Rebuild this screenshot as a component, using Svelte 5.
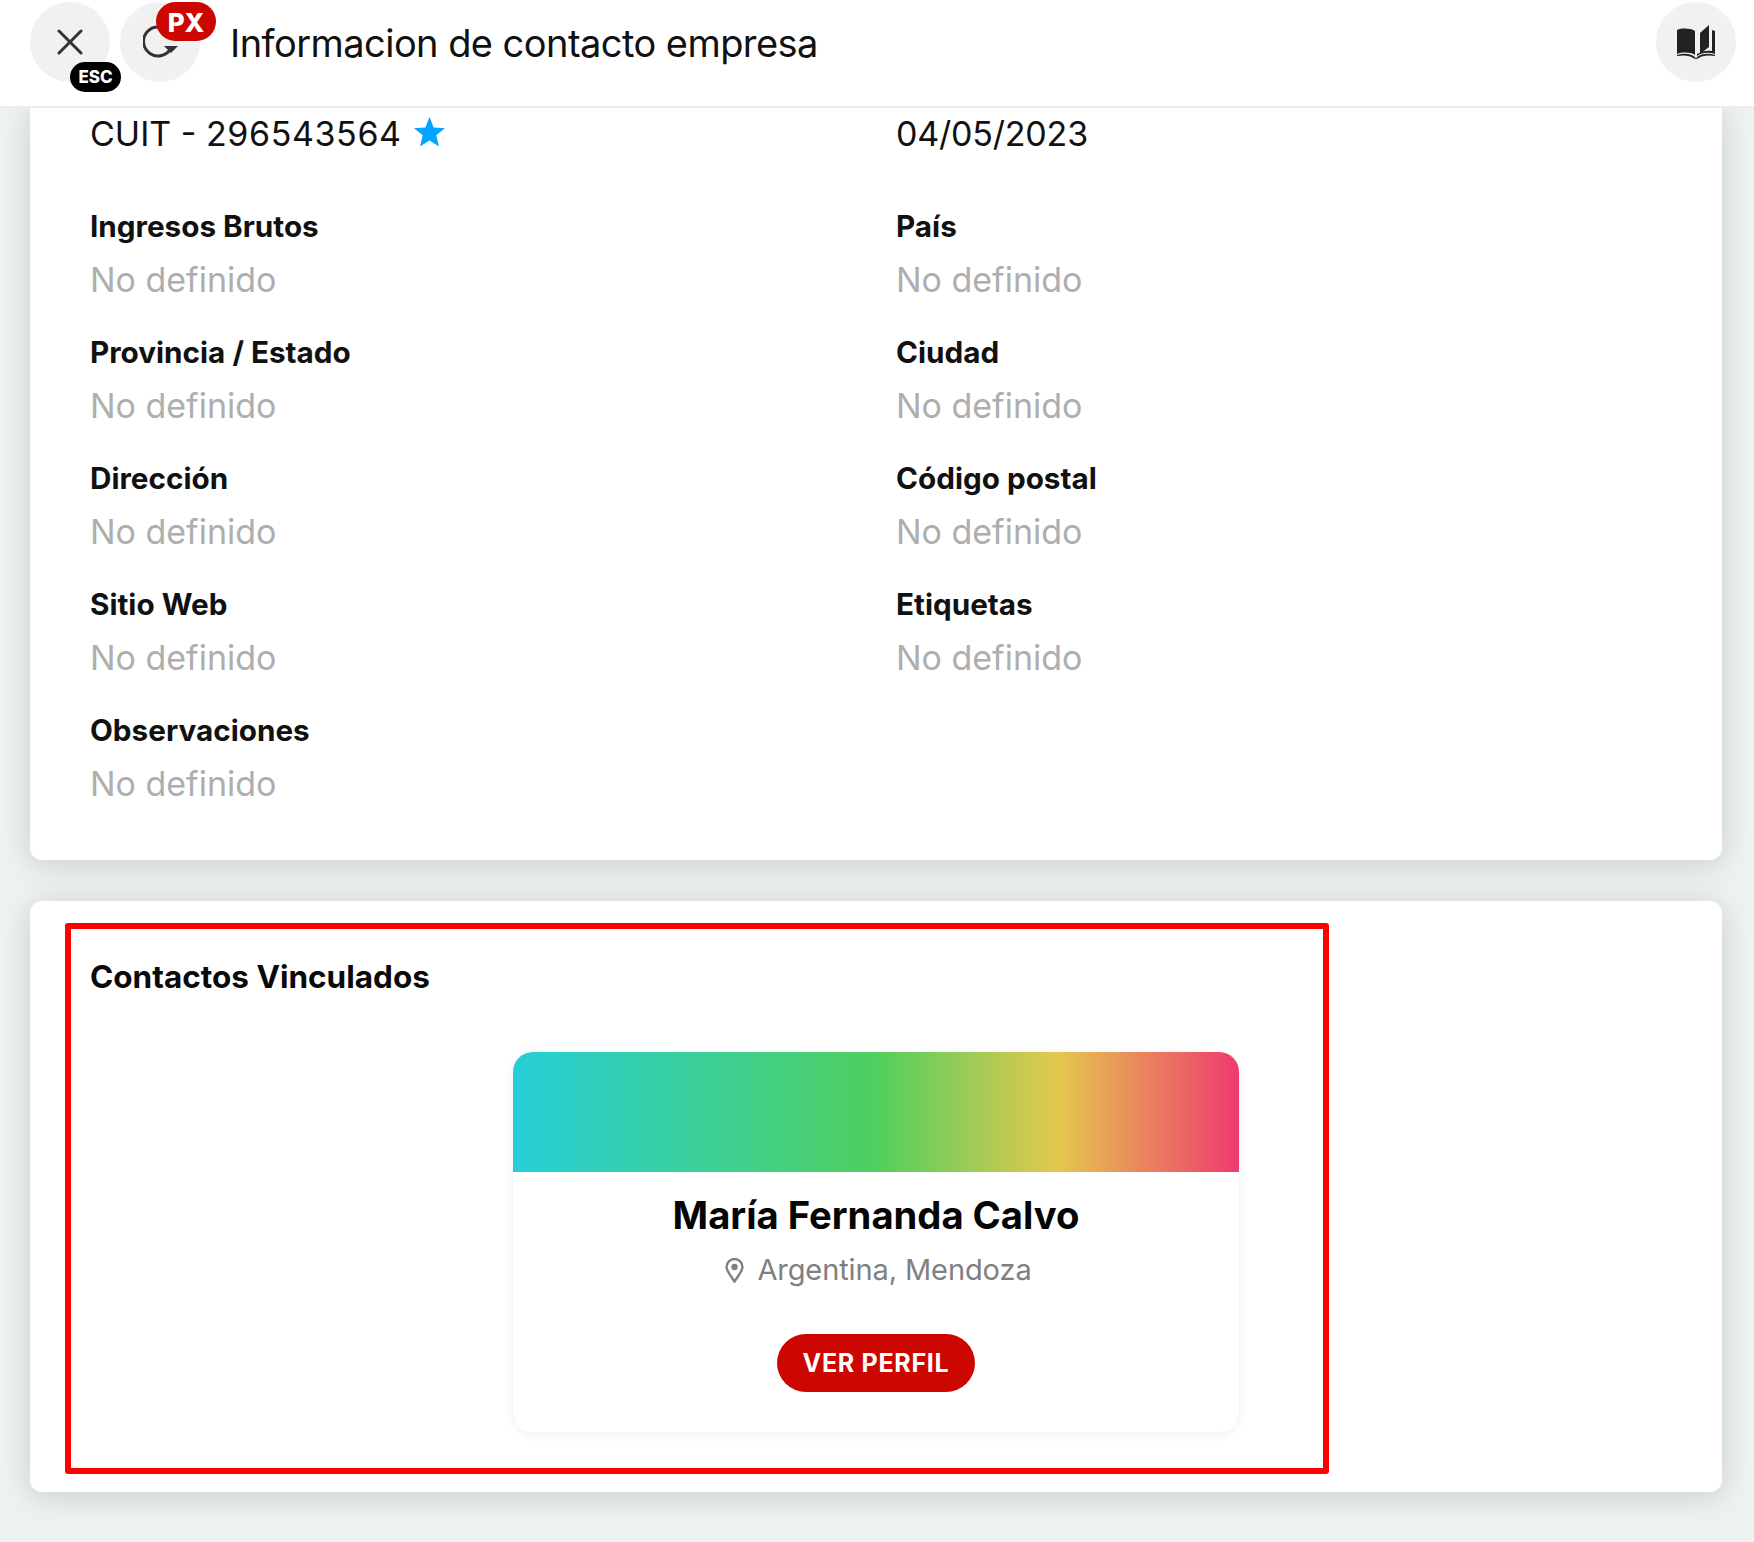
<script>
	const fields = [
		['Ingresos Brutos', 'País'],
		['Provincia / Estado', 'Ciudad'],
		['Dirección', 'Código postal'],
		['Sitio Web', 'Etiquetas'],
		['Observaciones']
	];
</script>

<div class="page">
	<header class="topbar">
		<div class="round close">
			<svg width="26" height="26" viewBox="0 0 26 26">
				<path d="M2 2 L24 24 M24 2 L2 24" stroke="#333" stroke-width="3" fill="none" stroke-linecap="round" />
			</svg>
			<span class="esc">ESC</span>
		</div>
		<div class="round reload">
			<svg width="38" height="34" viewBox="0 0 38 34">
				<path d="M28 23 A14.5 14.5 0 1 1 26 7" stroke="#333" stroke-width="3" fill="none" />
				<path d="M21 21 H35 L28 28 Z" fill="#333" />
			</svg>
			<span class="px">PX</span>
		</div>
		<h1>Informacion de contacto empresa</h1>
		<div class="round book">
			<svg width="40" height="36" viewBox="0 0 40 36">
				<path d="M1 6 C6 4 14 4 19 7 V31 C14 28 7 28 1 30 Z" fill="#222" />
				<path d="M24 9 L33 1 V23 L24 30 Z" fill="#222" />
				<path d="M36 6 L39 7 V30 C33 28 26 28 21 32 V30 C26 27 31 26 36 27 Z" fill="#222" />
				<path d="M1 31 C7 29 14 29 19 33 L20 35 L21 33 C26 29 33 29 39 31 V32 C33 31 26 31 21 35 H19 C14 31 7 31 1 32 Z" fill="#222" />
			</svg>
		</div>
	</header>

	<main class="content">
		<section class="card info">
			<div class="grid top">
				<p class="value dark cuit">
					CUIT - <span class="number">296543564</span>
					<svg class="star" width="31" height="30" viewBox="0 0 31 30">
						<path d="M15.5 0 L19.6 10.4 L31 11.2 L22.2 18.3 L25 29.5 L15.5 23.4 L6 29.5 L8.8 18.3 L0 11.2 L11.4 10.4 Z" fill="#00a5ff" />
					</svg>
				</p>
				<p class="value dark">04/05/2023</p>
			</div>
			<div class="grid">
				{#each fields as row}
					{#each row as label}
						<div class="field">
							<h3>{label}</h3>
							<p class="value">No definido</p>
						</div>
					{/each}
				{/each}
			</div>
		</section>

		<section class="card linked">
			<div class="highlight">
				<h2>Contactos Vinculados</h2>
				<div class="contacts">
					<article class="contact">
						<div class="banner"></div>
						<h4>María Fernanda Calvo</h4>
						<p class="place">
							<svg width="19" height="25" viewBox="0 0 19 25">
								<path d="M9.5 23.5 C5 16.5 1.5 13 1.5 9 A8 8 0 0 1 17.5 9 C17.5 13 14 16.5 9.5 23.5 Z" fill="none" stroke="#808080" stroke-width="2.4" />
								<circle cx="9.5" cy="9" r="3.2" fill="#808080" />
							</svg>
							Argentina, Mendoza
						</p>
						<button type="button">VER PERFIL</button>
					</article>
				</div>
			</div>
		</section>
	</main>
</div>

<style>
	:global(body) {
		background: #eef2f3;
	}

	.page {
		font-family: Inter, 'Liberation Sans', sans-serif;
		height: 1542px;
		overflow: hidden;
	}

	.topbar {
		position: relative;
		z-index: 2;
		box-sizing: border-box;
		height: 108px;
		background: #fff;
		border-bottom: 2px solid #ececec;
		display: flex;
		align-items: flex-start;
		gap: 10px;
		padding: 2px 18px 0 30px;
	}

	.round {
		position: relative;
		width: 80px;
		height: 80px;
		border-radius: 50%;
		background: #f1f1f1;
		display: flex;
		align-items: center;
		justify-content: center;
		flex-shrink: 0;
	}

	.reload svg {
		margin-left: 4px;
	}

	.esc {
		position: absolute;
		left: 40px;
		top: 60px;
		width: 51px;
		height: 30px;
		border-radius: 15px;
		background: #000;
		color: #fff;
		font-size: 17px;
		font-weight: 800;
		line-height: 30px;
		text-align: center;
	}

	.px {
		position: absolute;
		left: 36px;
		top: 0;
		width: 60px;
		height: 39px;
		border-radius: 20px;
		background: #cc0600;
		color: #fff;
		font-size: 26px;
		font-weight: 800;
		line-height: 42px;
		text-align: center;
	}

	h1 {
		flex: 1;
		margin: 0 0 0 20px;
		font-size: 38px;
		font-weight: 400;
		letter-spacing: -0.55px;
		line-height: 82px;
		color: #111;
	}

	.content {
		padding: 0 32px 0 30px;
	}

	.card {
		background: #fff;
		border-radius: 12px;
		box-shadow: 0 4px 30px rgba(60, 70, 70, 0.22);
	}

	.info {
		height: 752px;
		box-sizing: border-box;
		padding: 0 60px;
		border-radius: 0 0 12px 12px;
	}

	.grid {
		display: grid;
		grid-template-columns: 806px 1fr;
	}

	.top {
		height: 101px;
	}

	.field {
		height: 126px;
	}

	h3 {
		margin: -1px 0 0;
		font-size: 29.7px;
		font-weight: 700;
		line-height: 36px;
		color: #111;
	}

	.value {
		margin: 0;
		padding-top: 12px;
		font-size: 34px;
		letter-spacing: -0.02px;
		line-height: 48px;
		color: #aeaeae;
	}

	.dark {
		padding-top: 2px;
		color: #111;
		height: 48px;
		letter-spacing: -0.2px;
	}

	.cuit {
		letter-spacing: 0;
	}

	.number {
		letter-spacing: 0.6px;
	}

	.star {
		margin-left: 3px;
		vertical-align: -1px;
	}

	.linked {
		margin-top: 41px;
		height: 591px;
		box-sizing: border-box;
		padding: 22px 35px;
	}

	.highlight {
		box-sizing: border-box;
		width: 1264px;
		height: 551px;
		border: 6px solid #ff0000;
		border-radius: 3px;
		padding: 25px 84px 0 19px;
	}

	h2 {
		margin: 0;
		font-size: 31.5px;
		font-weight: 700;
		line-height: 46px;
		color: #0a0a0a;
	}

	.contacts {
		display: flex;
		justify-content: flex-end;
		margin-top: 52px;
	}

	.contact {
		width: 726px;
		height: 380px;
		border-radius: 20px;
		background: #fff;
		box-shadow: 0 2px 12px rgba(0, 0, 0, 0.07);
		overflow: hidden;
		text-align: center;
	}

	.banner {
		height: 120px;
		background: linear-gradient(90deg, #26cfd8 0%, #50cf5e 50%, #e5c84e 75%, #ee3a6e 100%);
	}

	h4 {
		margin: 20px 0 0;
		font-size: 38.2px;
		font-weight: 700;
		line-height: 46px;
		color: #050505;
	}

	.place {
		margin: 12px 0 0;
		padding-left: 5px;
		font-size: 29px;
		letter-spacing: -0.1px;
		line-height: 40px;
		color: #808080;
		display: flex;
		align-items: center;
		justify-content: center;
		gap: 13px;
	}

	button {
		display: block;
		margin: 44px auto 0;
		width: 198px;
		height: 58px;
		border: 0;
		border-radius: 29px;
		background: #cc0600;
		color: #fff;
		font-family: inherit;
		font-size: 25px;
		font-weight: 700;
		letter-spacing: 0.7px;
	}
</style>
